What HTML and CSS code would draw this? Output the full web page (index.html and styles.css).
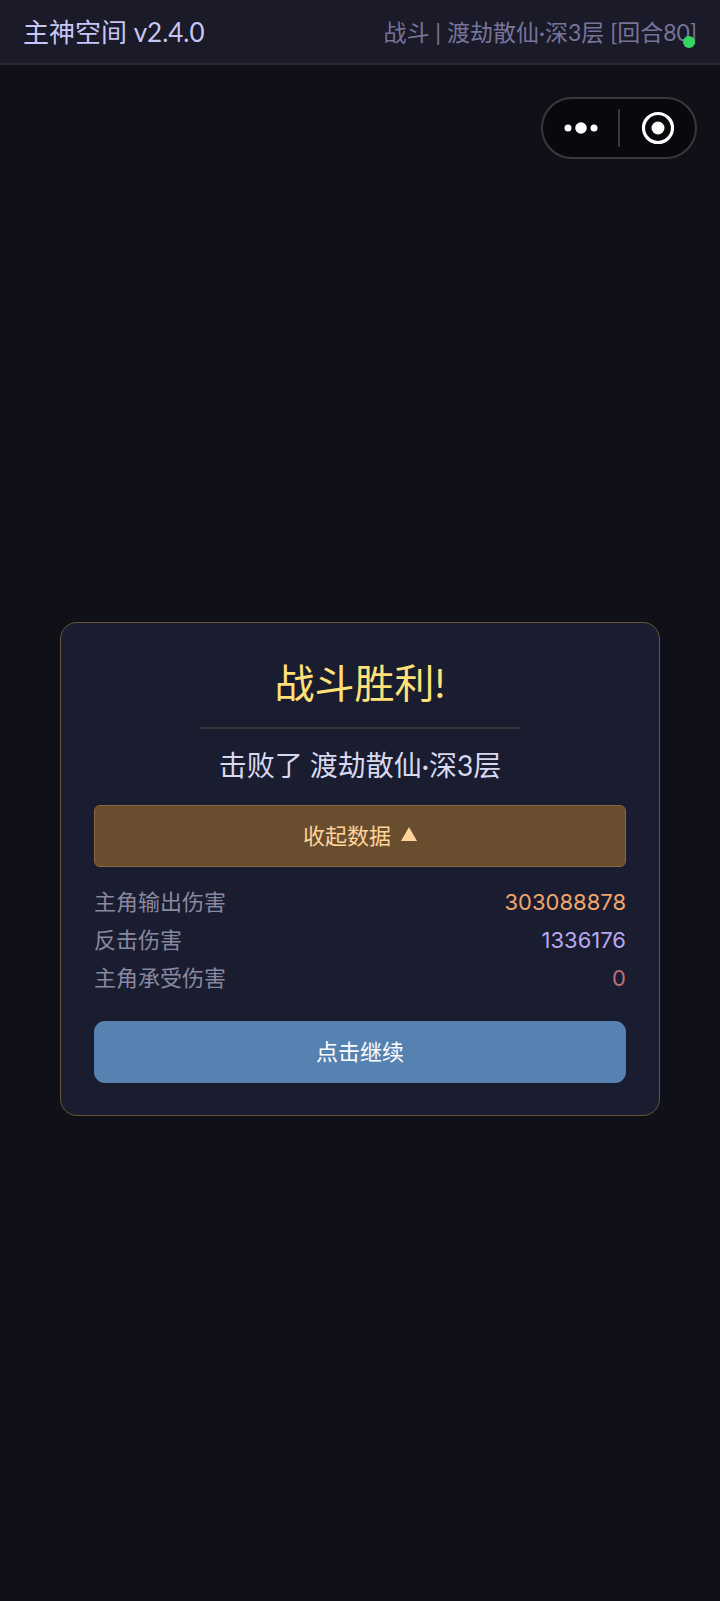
FILE: index.html
```html
<!DOCTYPE html>
<html lang="zh-CN">
<head>
    <meta charset="UTF-8">
    <meta name="viewport" content="width=device-width, initial-scale=1.0">
    <title>主神空间</title>
    <link rel="stylesheet" href="styles.css">
</head>
<body>
    <header class="topbar">
        <h1 class="app-name">主神空间 v2.4.0</h1>
        <div class="status">
            战斗 | 渡劫散仙·深3层 [回合80]
            <span class="online-dot"></span>
        </div>
    </header>

    <div class="capsule">
        <button class="capsule-btn" type="button" aria-label="更多">
            <svg width="34" height="34" viewBox="0 0 34 34" fill="#fff">
                <circle cx="4" cy="17" r="3.5"/>
                <circle cx="17" cy="17" r="5.8"/>
                <circle cx="30" cy="17" r="3.5"/>
            </svg>
        </button>
        <span class="capsule-line"></span>
        <button class="capsule-btn" type="button" aria-label="关闭">
            <svg width="34" height="34" viewBox="0 0 34 34">
                <circle cx="17" cy="17" r="14.5" fill="none" stroke="#fff" stroke-width="3.2"/>
                <circle cx="17" cy="17" r="6.5" fill="#fff"/>
            </svg>
        </button>
    </div>

    <main class="stage">
        <section class="card">
            <h2 class="title">战斗胜利!</h2>
            <hr class="divider">
            <p class="subtitle">击败了 渡劫散仙·深3层</p>
            <button class="btn btn-toggle" type="button">
                收起数据
                <svg width="16" height="14" viewBox="0 0 16 14" fill="#ffd49a"><path d="M8 0L16 14H0Z"/></svg>
            </button>
            <dl class="stats">
                <div class="stat"><dt>主角输出伤害</dt><dd class="orange">303088878</dd></div>
                <div class="stat"><dt>反击伤害</dt><dd class="purple">1336176</dd></div>
                <div class="stat"><dt>主角承受伤害</dt><dd class="red">0</dd></div>
            </dl>
            <button class="btn btn-continue" type="button">点击继续</button>
        </section>
    </main>
</body>
</html>
```

FILE: styles.css
```css
* {
    box-sizing: border-box;
    margin: 0;
    padding: 0;
}
body {
    min-height: 100vh;
    display: flex;
    flex-direction: column;
    background: #101018;
    color: #d8d8f0;
    font-family: Lato, "Noto Sans CJK SC", sans-serif;
    font-size: 22px;
}
h1, h2 {
    font-weight: normal;
}
button {
    font: inherit;
    border: none;
    cursor: pointer;
}

/* 顶部栏 */
.topbar {
    display: flex;
    align-items: center;
    justify-content: space-between;
    height: 65px;
    padding: 0 23px 2px;
    background: #1b1a28;
    border-bottom: 2px solid #2a2938;
}
.app-name {
    font-size: 26px;
    color: #c8c6f5;
}
.status {
    position: relative;
    font-size: 23px;
    color: #77749a;
}
.online-dot {
    position: absolute;
    right: 2px;
    bottom: 0;
    width: 12px;
    height: 12px;
    border-radius: 50%;
    background: #35d562;
}

/* 胶囊按钮 */
.capsule {
    display: flex;
    align-items: center;
    align-self: flex-end;
    width: 156px;
    height: 62px;
    margin: 32px 23px 0;
    background: #09090d;
    border: 2px solid #39393d;
    border-radius: 31px;
}
.capsule-btn {
    flex: 1;
    display: flex;
    justify-content: center;
    background: none;
}
.capsule-line {
    width: 2px;
    height: 38px;
    background: #39393d;
}

/* 战斗结算 */
.stage {
    flex: 1;
    display: flex;
    align-items: center;
    padding: 0 60px 22px;
}
.card {
    width: 100%;
    padding: 32px 33px;
    text-align: center;
    background: #191d2f;
    border: 1px solid #665836;
    border-radius: 17px;
}
.title {
    font-size: 40px;
    line-height: 56px;
    color: #ffe178;
}
.divider {
    width: 60%;
    height: 2px;
    margin: 16px auto 18px;
    border: none;
    background: #36363a;
}
.subtitle {
    font-size: 28px;
    line-height: 36px;
    margin-bottom: 22px;
}
.btn {
    display: flex;
    align-items: center;
    justify-content: center;
    gap: 10px;
    width: 100%;
    height: 62px;
    padding-bottom: 4px;
}
.btn-toggle {
    background: #694d2f;
    border: 1px solid #8a6840;
    border-radius: 6px;
    color: #ffd49a;
}
.btn-continue {
    background: #5682b2;
    border-radius: 11px;
    color: #fff;
}
.stats {
    margin: 16px 0 24px;
}
.stat {
    display: flex;
    justify-content: space-between;
    line-height: 38px;
}
.stat dt {
    color: #8988a0;
}
.stat dd {
    font-family: Inter, sans-serif;
}
.orange {
    color: #f2a56c;
}
.purple {
    color: #b9a9f2;
}
.red {
    color: #bd7078;
}
```
